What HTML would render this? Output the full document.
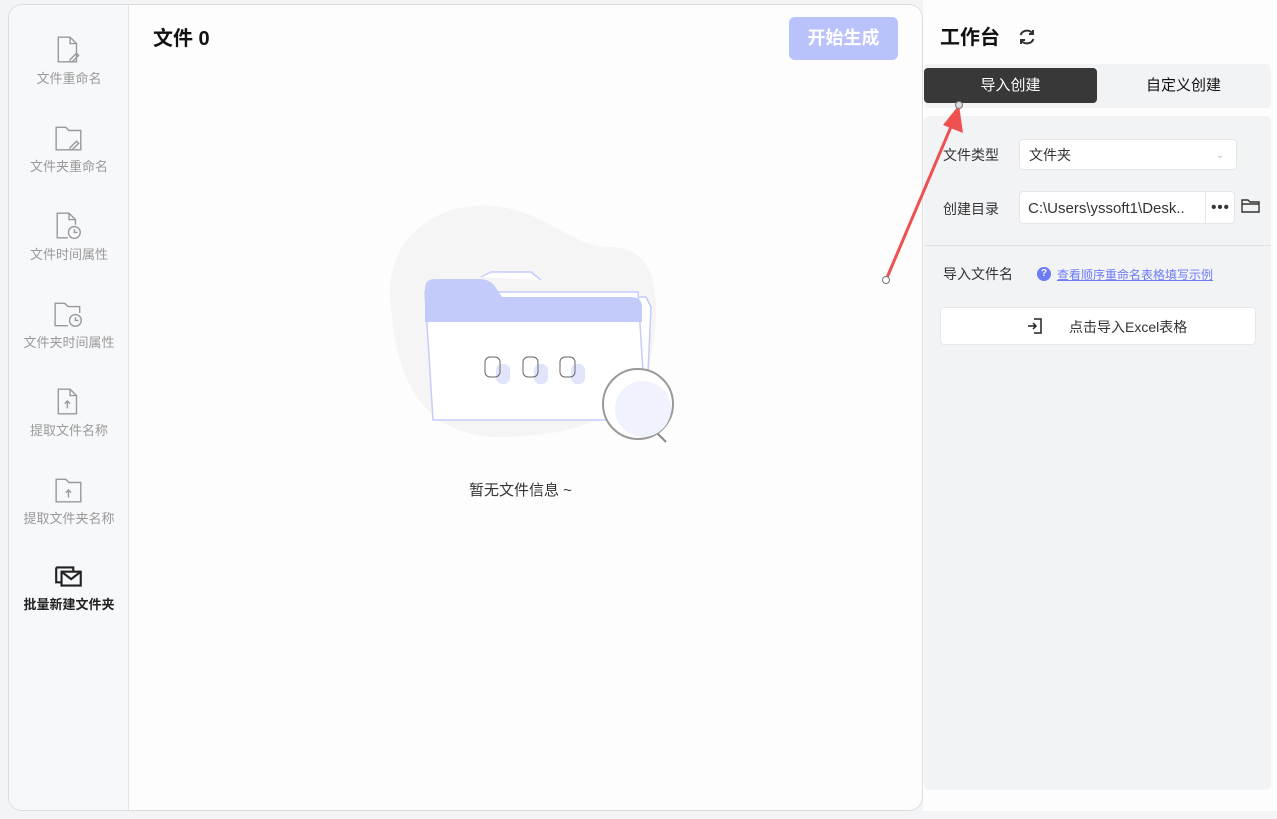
<!DOCTYPE html>
<html><head><meta charset="utf-8"><style>
*{margin:0;padding:0;box-sizing:border-box}
body{width:1277px;height:819px;background:#f3f4f6;font-family:"Liberation Sans","Noto Sans CJK SC",sans-serif;position:relative;overflow:hidden}
.card{position:absolute;left:8px;top:4px;width:915px;height:807px;background:#fdfdfd;border:1px solid #dcdcdc;border-radius:14px;overflow:hidden}
.side{position:absolute;left:0;top:0;width:120px;height:100%;background:#f7f8fa;border-right:1px solid #e3e3e3}
.it{position:absolute;left:0;width:120px;text-align:center;font-size:13px;color:#999}
.it svg{display:block;margin:0 auto 3px}
.right{position:absolute;left:923px;top:0;width:354px;height:811px;background:#fdfdfd}
.lab{position:absolute;font-size:14px;color:#333}
.box{position:absolute;background:#fff;border:1px solid #e6e6e6;border-radius:4px;font-size:14px;color:#333}
</style></head><body>
<div class="card">
 <div class="side">
  <div class="it" style="top:30px"><svg width="28" height="30" viewBox="0 0 26 28" fill="none" stroke="#999" stroke-width="1.3"><path d="M3 2h11l6 6v17H3z"/><path d="M14 2v6h6"/><path d="M14 23l6-6 2 2-6 6h-2z"/></svg>文件重命名</div>
  <div class="it" style="top:118px"><svg width="30" height="30" viewBox="0 0 28 28" fill="none" stroke="#999" stroke-width="1.3"><path d="M2 4h9l3 3h11v18H2z"/><path d="M15 23l6-6 2 2-6 6h-2z"/></svg>文件夹重命名</div>
  <div class="it" style="top:206px"><svg width="30" height="30" viewBox="0 0 28 28" fill="none" stroke="#999" stroke-width="1.3"><path d="M13 25H3V2h11l6 6v5"/><path d="M14 2v6h6"/><circle cx="19" cy="20" r="5.5"/><path d="M19 17v3h3"/></svg>文件时间属性</div>
  <div class="it" style="top:294px"><svg width="32" height="30" viewBox="0 0 30 28" fill="none" stroke="#999" stroke-width="1.3"><path d="M14 25H2V4h9l3 3h11v6"/><circle cx="21" cy="20" r="5.5"/><path d="M21 17v3h3"/></svg>文件夹时间属性</div>
  <div class="it" style="top:382px"><svg width="28" height="30" viewBox="0 0 26 28" fill="none" stroke="#999" stroke-width="1.3"><path d="M3 2h11l6 6v17H3z"/><path d="M14 2v6h6"/><path d="M11.5 20v-7M9 15.5l2.5-2.5 2.5 2.5"/></svg>提取文件名称</div>
  <div class="it" style="top:470px"><svg width="30" height="30" viewBox="0 0 28 28" fill="none" stroke="#999" stroke-width="1.3"><path d="M2 4h9l3 3h11v18H2z"/><path d="M13.5 21v-7M11 16.5l2.5-2.5 2.5 2.5"/></svg>提取文件夹名称</div>
  <div class="it" style="top:558px;color:#222;font-weight:bold"><svg width="32" height="28" viewBox="0 0 30 26" fill="none" stroke="#222" stroke-width="2"><path d="M3 4h16v4"/><path d="M3 4v14h5"/><rect x="8" y="8" width="18" height="13"/><path d="M8 8l9 7 9-7"/></svg>批量新建文件夹</div>
 </div>
 <div style="position:absolute;left:144px;top:20px;font-size:20px;font-weight:bold;color:#111;line-height:28px">文件 0</div>
 <div style="position:absolute;left:780px;top:12px;width:109px;height:43px;background:#b9c2fb;border-radius:6px;color:#fff;font-size:18px;font-weight:bold;text-align:center;line-height:43px">开始生成</div>
 <svg style="position:absolute;left:372px;top:192px" width="300" height="250" viewBox="0 0 300 250">
  <path d="M10 110C0 40 60 0 120 10c50 8 70 40 110 40 50 0 50 60 40 110-10 60-80 80-150 80C40 240 15 180 10 110z" fill="#f5f5f6"/>
  <path d="M100 80l10-5h40l10 8" fill="#fff" stroke="#c5cbfa" stroke-width="1.5"/>
  <path d="M225 100h40l5 10-5 110h-20" fill="#fff" stroke="#c5cbfa" stroke-width="1.5"/>
  <path d="M44 95h213l8 128H52z" fill="#fff" stroke="#c5cbfa" stroke-width="1.5"/>
  <path d="M44 125V92q0-10 10-10h45q8 0 14 6l8 12h128q12 0 12 10v15z" fill="#c3cbfa"/>
  <g fill="#e1e5fb"><rect x="115" y="167" width="14" height="20" rx="6"/><rect x="153" y="167" width="14" height="20" rx="6"/><rect x="190" y="167" width="14" height="20" rx="6"/></g>
  <g fill="none" stroke="#666" stroke-width="1"><rect x="104" y="160" width="15" height="20" rx="5"/><rect x="142" y="160" width="15" height="20" rx="5"/><rect x="179" y="160" width="15" height="20" rx="5"/></g>
  <line x1="275" y1="235" x2="285" y2="245" stroke="#888" stroke-width="2"/>
  <circle cx="257" cy="207" r="35" fill="#fff" stroke="#999" stroke-width="2"/>
  <circle cx="262" cy="212" r="28" fill="#f0f2fd"/>
 </svg>
 <div style="position:absolute;left:460px;top:474px;font-size:15px;color:#333">暂无文件信息 ~</div>
</div>
<div class="right">
 <div style="position:absolute;left:17px;top:24px;font-size:20px;font-weight:bold;color:#111;line-height:28px">工作台</div>
 <svg style="position:absolute;left:94px;top:27px" width="20" height="20" viewBox="0 0 20 20" fill="none" stroke="#333" stroke-width="2"><path d="M16 7A7 7 0 0 0 3.5 8M4 13a7 7 0 0 0 12.5-1"/><path d="M16 3v4h-4M4 17v-4h4"/></svg>
 <div style="position:absolute;left:1px;top:64px;width:347px;height:44px;background:#f2f3f5;border-radius:4px"></div>
 <div style="position:absolute;left:1px;top:68px;width:173px;height:35px;background:#383838;border-radius:4px;color:#fff;font-size:15px;text-align:center;line-height:36px">导入创建</div>
 <div style="position:absolute;left:174px;top:68px;width:173px;height:35px;color:#111;font-size:15px;text-align:center;line-height:36px">自定义创建</div>
 <div style="position:absolute;left:1px;top:116px;width:347px;height:674px;background:#f2f3f5;border-radius:5px"></div>
 <div class="lab" style="left:20px;top:145px">文件类型</div>
 <div class="box" style="left:96px;top:139px;width:218px;height:31px;line-height:31px;padding-left:9px">文件夹<span style="position:absolute;right:12px;top:0;color:#bbb;font-size:10px">⌄</span></div>
 <div class="lab" style="left:20px;top:199px">创建目录</div>
 <div class="box" style="left:96px;top:191px;width:216px;height:33px;line-height:33px;padding-left:8px;font-size:15px">C:\Users\yssoft1\Desk..<span style="position:absolute;left:185px;top:0;width:30px;height:31px;border-left:1px solid #e6e6e6;text-align:center;font-weight:bold;letter-spacing:1px;line-height:31px">•••</span></div>
 <svg style="position:absolute;left:318px;top:198px" width="20" height="16" viewBox="0 0 20 16" fill="none" stroke="#333" stroke-width="1.4"><path d="M1 2h6l2 2h9v10H1z"/><path d="M1 6h17"/></svg>
 <div style="position:absolute;left:1px;top:245px;width:347px;height:1px;background:#e2e2e2"></div>
 <div class="lab" style="left:20px;top:264px">导入文件名</div>
 <div style="position:absolute;left:114px;top:267px;width:14px;height:14px;border-radius:50%;background:#6b7cf6;color:#fff;font-size:10px;font-weight:bold;text-align:center;line-height:14px">?</div>
 <div style="position:absolute;left:134px;top:266px;font-size:12px;color:#6b7cf6;text-decoration:underline">查看顺序重命名表格填写示例</div>
 <div class="box" style="left:17px;top:307px;width:316px;height:38px;line-height:38px;font-size:14px;border-color:#e8e8e8"><svg style="position:absolute;left:86px;top:10px" width="16" height="16" viewBox="0 0 16 16" fill="none" stroke="#222" stroke-width="1.5"><path d="M7 1h7v14H7M1 8h8M6 5l3 3-3 3"/></svg><span style="position:absolute;left:128px">点击导入Excel表格</span></div>
</div>
<svg style="position:absolute;left:0;top:0" width="1277" height="819">
 <line x1="886" y1="280" x2="953" y2="122" stroke="#ef5050" stroke-width="3"/>
 <path d="M959 105l4 28-20-8z" fill="#ef5050"/>
 <circle cx="886" cy="280" r="3.5" fill="#fff" stroke="#777"/>
 <circle cx="959" cy="105" r="3.5" fill="#ddd" stroke="#777"/>
</svg>
</body></html>
